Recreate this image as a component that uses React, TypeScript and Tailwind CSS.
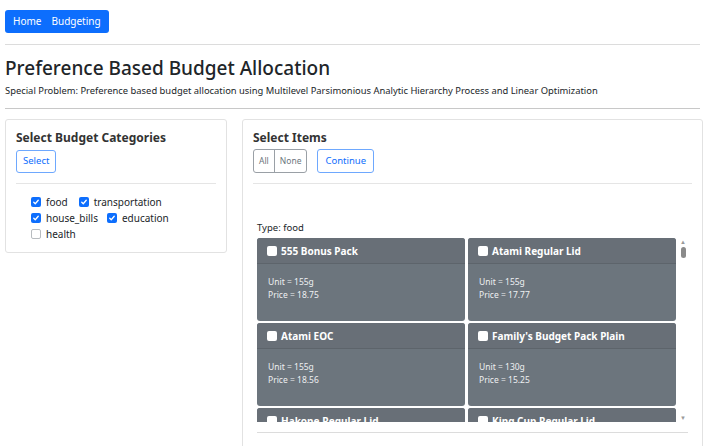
import React from "react";

const items = [
  { name: "555 Bonus Pack", unit: "155g", price: "18.75" },
  { name: "Atami Regular Lid", unit: "155g", price: "17.77" },
  { name: "Atami EOC", unit: "155g", price: "18.56" },
  { name: "Family's Budget Pack Plain", unit: "130g", price: "15.25" },
  { name: "Hakone Regular Lid", unit: "155g", price: "17.50" },
  { name: "King Cup Regular Lid", unit: "155g", price: "16.95" },
];

function CheckBox({ checked }: { checked: boolean }) {
  return checked ? (
    <span className="w-[10px] h-[10px] rounded-[2px] bg-[#0d6efd] flex items-center justify-center">
      <svg width="8" height="8" viewBox="0 0 16 16" fill="none">
        <path d="M3.5 8.5l3 3 6-7" stroke="white" strokeWidth="2.6" strokeLinecap="round" strokeLinejoin="round" />
      </svg>
    </span>
  ) : (
    <span className="w-[10px] h-[10px] rounded-[2px] border border-[#b8bcc0] bg-white" />
  );
}

function ItemCard({ name, unit, price }: { name: string; unit: string; price: string }) {
  return (
    <div className="h-[83px] rounded-[3px] bg-[#6c757d] text-white overflow-hidden">
      <div className="h-[26px] flex items-center gap-[4px] pl-[10px] border-b border-[#5d646b] bg-[#686f77]">
        <span className="w-[10px] h-[10px] rounded-[2px] bg-white" />
        <span className="text-[10px] font-bold leading-none">{name}</span>
      </div>
      <div className="pt-[11px] pl-[11px] text-[8.5px] leading-[13px] text-[#eef0f2]">
        <div>Unit = {unit}</div>
        <div>Price = {price}</div>
      </div>
    </div>
  );
}

export default function App() {
  return (
    <div className="w-[705px] h-[446px] overflow-hidden bg-white text-[#212529] font-['Noto_Sans',sans-serif]">
      {/* NAV */}
      <div className="pt-[10px] px-[5px] flex">
        <div className="flex items-center h-[23px] rounded-[3px] bg-[#0d6efd] text-white text-[10px] pl-[8px] pr-[8px] gap-[10px]">
          <span>Home</span>
          <span>Budgeting</span>
        </div>
      </div>
      <div className="mx-[5px] mt-[11px] border-t border-[#dcdcdc]" />

      {/* HEADER */}
      <div className="px-[5px] pt-[11px]">
        <h1 className="text-[19px] leading-[24px] font-medium">Preference Based Budget Allocation</h1>
        <p className="text-[9.4px] leading-[14px] mt-[4px]">
          Special Problem: Preference based budget allocation using Multilevel Parsimonious Analytic Hierarchy Process and Linear Optimization
        </p>
      </div>
      <div className="mx-[5px] mt-[10px] border-t border-[#c8c8c8]" />

      {/* BODY */}
      <div className="flex gap-[15px] pl-[5px] pr-[3px] mt-[10px]">
        {/* LEFT CARD */}
        <div className="w-[222px] h-[134px] shrink-0 rounded-[3px] border border-[#e2e2e2] px-[10px] pt-[10px]">
          <h3 className="text-[12px] font-bold leading-[16px] text-[#333]">Select Budget Categories</h3>
          <button className="mt-[3px] h-[23px] px-[6px] rounded-[3px] border border-[#6ea8fe] text-[#0d6efd] text-[9.5px]">
            Select
          </button>
          <div className="mt-[10px] border-t border-[#e5e5e5]" />
          <div className="pl-[15px] pt-[12px] flex flex-col gap-[3px] text-[10px] leading-[13px]">
            <div className="flex items-center">
              <CheckBox checked />
              <span className="ml-[5px]">food</span>
              <span className="ml-[11px]"><CheckBox checked /></span>
              <span className="ml-[5px]">transportation</span>
            </div>
            <div className="flex items-center">
              <CheckBox checked />
              <span className="ml-[5px]">house_bills</span>
              <span className="ml-[9px]"><CheckBox checked /></span>
              <span className="ml-[5px]">education</span>
            </div>
            <div className="flex items-center">
              <CheckBox checked={false} />
              <span className="ml-[5px]">health</span>
            </div>
          </div>
        </div>

        {/* RIGHT CARD */}
        <div className="flex-1 h-[340px] rounded-[3px] border border-[#e2e2e2] px-[10px] pt-[10px]">
          <h3 className="text-[12px] font-bold leading-[16px] text-[#333]">Select Items</h3>
          <div className="mt-[3px] flex items-center gap-[10px]">
            <div className="flex h-[24px] rounded-[3px] border border-[#9aa0a6] text-[8.5px] text-[#6c757d] overflow-hidden">
              <span className="px-[5px] flex items-center border-r border-[#9aa0a6]">All</span>
              <span className="px-[5px] flex items-center">None</span>
            </div>
            <button className="h-[24px] px-[7px] rounded-[3px] border border-[#6ea8fe] text-[#0d6efd] text-[9.5px]">
              Continue
            </button>
          </div>
          <div className="mt-[10px] border-t border-[#e5e5e5]" />

          <div className="mt-[38px] pl-[4px] text-[9.5px] leading-[12px]">Type: food</div>
          <div className="mt-[4px] ml-[4px] mr-[4px] flex border-b border-[#dcdcdc] pb-[10px]">
            <div className="w-[419px] h-[184px] overflow-hidden">
              <div className="grid grid-cols-2 gap-x-[3px] gap-y-[2px]">
                {items.map((it, i) => (
                  <ItemCard key={i} {...it} />
                ))}
              </div>
            </div>
            {/* scrollbar */}
            <div className="w-[10px] h-[184px] ml-[2px] flex flex-col items-center">
              <span className="text-[6px] leading-[8px] text-[#9a9a9a]">▲</span>
              <span className="w-[5px] h-[11px] rounded-full bg-[#8a8a8a] mt-[1px]" />
              <span className="flex-1" />
              <span className="text-[6px] leading-[8px] text-[#9a9a9a]">▼</span>
            </div>
          </div>
        </div>
      </div>
    </div>
  );
}
